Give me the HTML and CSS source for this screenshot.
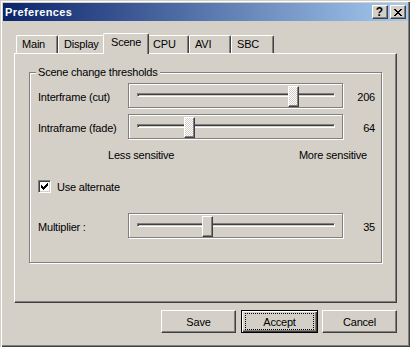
FILE: index.html
```html
<!DOCTYPE html>
<html>
<head>
<meta charset="utf-8">
<title>Preferences</title>
<link rel="stylesheet" href="styles.css">
</head>
<body>
<div class="window">
  <div class="caption">
    <span class="title">Preferences</span>
    <div class="cap-btns">
      <div class="cap-btn help">?</div>
      <div class="cap-btn close">
        <svg width="8" height="7" viewBox="0 0 8 7" shape-rendering="crispEdges">
          <rect x="0" y="0" width="2" height="1"/><rect x="6" y="0" width="2" height="1"/>
          <rect x="1" y="1" width="2" height="1"/><rect x="5" y="1" width="2" height="1"/>
          <rect x="2" y="2" width="4" height="1"/>
          <rect x="3" y="3" width="2" height="1"/>
          <rect x="2" y="4" width="4" height="1"/>
          <rect x="1" y="5" width="2" height="1"/><rect x="5" y="5" width="2" height="1"/>
          <rect x="0" y="6" width="2" height="1"/><rect x="6" y="6" width="2" height="1"/>
        </svg>
      </div>
    </div>
  </div>

  <div class="tabs">
    <div class="tab t-main">Main</div>
    <div class="tab t-display">Display</div>
    <div class="tab t-scene active">Scene</div>
    <div class="tab t-cpu">CPU</div>
    <div class="tab t-avi">AVI</div>
    <div class="tab t-sbc">SBC</div>
  </div>

  <div class="panel">
    <div class="group">
      <span class="group-title">Scene change thresholds</span>

      <div class="slider-row">
        <span class="slider-label">Interframe (cut)</span>
        <div class="slider-box">
          <div class="track"><div class="thumb focus" style="left:150px"></div></div>
        </div>
        <span class="value">206</span>
      </div>

      <div class="slider-row">
        <span class="slider-label">Intraframe (fade)</span>
        <div class="slider-box">
          <div class="track"><div class="thumb focus" style="left:46px"></div></div>
        </div>
        <span class="value">64</span>
      </div>

      <div class="sens">
        <span>Less sensitive</span>
        <span>More sensitive</span>
      </div>

      <div class="check-row">
        <div class="checkbox">
          <svg width="9" height="9" viewBox="0 0 9 9" shape-rendering="crispEdges">
            <rect x="1" y="3" width="1" height="3"/>
            <rect x="2" y="4" width="1" height="3"/>
            <rect x="3" y="5" width="1" height="3"/>
            <rect x="4" y="4" width="1" height="3"/>
            <rect x="5" y="3" width="1" height="3"/>
            <rect x="6" y="2" width="1" height="3"/>
            <rect x="7" y="1" width="1" height="3"/>
          </svg>
        </div>
        <span>Use alternate</span>
      </div>

      <div class="slider-row multiplier">
        <span class="slider-label">Multiplier :</span>
        <div class="slider-box">
          <div class="track"><div class="thumb" style="left:64px"></div></div>
        </div>
        <span class="value">35</span>
      </div>
    </div>
  </div>

  <div class="buttons">
    <div class="btn">Save</div>
    <div class="btn default">Accept</div>
    <div class="btn">Cancel</div>
  </div>
</div>
</body>
</html>
```

FILE: styles.css
```css
* { box-sizing: border-box; }

html, body {
  margin: 0;
  padding: 0;
  background: #d4d0c8;
}

body {
  font-family: "Liberation Sans", Arial, sans-serif;
  font-size: 11px;
  letter-spacing: -0.2px;
  color: #000;
}

.window {
  width: 410px;
  height: 347px;
  background: #d4d0c8;
  padding: 3px 2px 2px 3px;
  box-shadow: inset 1px 1px 0 #d4d0c8, inset 2px 2px 0 #fff,
              inset -1px -1px 0 #404040, inset -2px -2px 0 #808080;
  display: flex;
  flex-direction: column;
}

/* Caption */
.caption {
  height: 18px;
  flex: none;
  display: flex;
  align-items: center;
  justify-content: space-between;
  background: linear-gradient(to right, #0a246a, #a6caf0);
  padding: 0 2px 0 2px;
}

.title {
  color: #fff;
  font-weight: bold;
  font-size: 11px;
  letter-spacing: 0.4px;
}

.cap-btns {
  display: flex;
  gap: 2px;
}

.cap-btn {
  width: 16px;
  height: 14px;
  background: #d4d0c8;
  border: 1px solid;
  border-color: #fff #404040 #404040 #fff;
  box-shadow: inset -1px -1px 0 #808080;
  display: flex;
  align-items: center;
  justify-content: center;
}

.cap-btn.help {
  font-weight: bold;
  font-size: 12px;
  line-height: 12px;
  padding-right: 1px;
  letter-spacing: 0;
}

.cap-btn.close svg {
  display: block;
  fill: #000;
  margin-right: 1px;
}

/* Tabs */
.tabs {
  display: flex;
  align-items: flex-end;
  margin: 12px 0 0 13px;
  height: 20px;
  flex: none;
}

.tab {
  height: 18px;
  border-left: 1px solid #fff;
  border-top: 1px solid #fff;
  border-right: 1px solid #404040;
  box-shadow: inset -1px 0 0 #808080;
  border-top-left-radius: 2px;
  border-top-right-radius: 2px;
  padding-left: 5px;
  line-height: 17px;
  white-space: nowrap;
  background: #d4d0c8;
}

.t-main { width: 42px; }
.t-display { width: 47px; }
.t-scene { width: 42px; }
.t-cpu { width: 42px; }
.t-avi { width: 42px; }
.t-sbc { width: 43px; }

.tab.active {
  width: 46px;
  height: 21px;
  margin: 0 -2px -1px;
  padding-left: 7px;
  line-height: 16px;
  position: relative;
  z-index: 1;
}

/* Panel */
.panel {
  flex: none;
  margin-left: 11px;
  width: 383px;
  height: 250px;
  border: 1px solid;
  border-color: #fff #404040 #404040 #fff;
  box-shadow: inset -1px -1px 0 #808080;
  padding: 18px 0 0 14px;
}

.group {
  position: relative;
  width: 353px;
  height: 191px;
  border: 1px solid #808080;
  box-shadow: inset 1px 1px 0 #fff, 1px 1px 0 #fff;
  padding: 10px 0 0 8px;
}

.group-title {
  position: absolute;
  top: -7px;
  left: 6px;
  padding: 0 2px;
  background: #d4d0c8;
  line-height: 13px;
}

.slider-row {
  display: flex;
  align-items: center;
  height: 25px;
}

.slider-row + .slider-row { margin-top: 6px; }

.slider-row.multiplier { margin-top: 20px; }

.slider-label {
  width: 90px;
  flex: none;
  padding-top: 2px;
}

.slider-box {
  width: 215px;
  height: 25px;
  flex: none;
  border: 1px solid #808080;
  box-shadow: inset 1px 1px 0 #fff, 1px 1px 0 #fff;
  padding: 9px 7px 0 8px;
  display: flex;
  align-items: flex-start;
}

.track {
  position: relative;
  flex: 1;
  height: 4px;
  border-top: 1px solid #808080;
  border-left: 1px solid #808080;
  border-right: 1px solid #fff;
  border-bottom: 1px solid #fff;
  box-shadow: inset 1px 1px 0 #404040;
}

.thumb {
  position: absolute;
  top: -8px;
  width: 11px;
  height: 21px;
  background: #d4d0c8;
  border: 1px solid;
  border-color: #fff #404040 #404040 #fff;
  box-shadow: inset -1px -1px 0 #808080;
}

.thumb.focus {
  background: repeating-conic-gradient(#fff 0 25%, #d4d0c8 0 50%) 0 0 / 2px 2px;
}

.value {
  width: 32px;
  flex: none;
  text-align: right;
  padding-top: 2px;
}

.sens {
  display: flex;
  justify-content: space-between;
  margin: 10px 0 0 70px;
  width: 259px;
  line-height: 13px;
}

.check-row {
  display: flex;
  align-items: center;
  margin-top: 18px;
  height: 13px;
}

.checkbox {
  width: 13px;
  height: 13px;
  flex: none;
  background: #fff;
  border: 1px solid;
  border-color: #808080 #fff #fff #808080;
  box-shadow: inset 1px 1px 0 #404040, inset -1px -1px 0 #d4d0c8;
  padding: 1px;
  margin-right: 6px;
}

.checkbox svg {
  display: block;
  fill: #000;
}

/* Buttons */
.buttons {
  flex: none;
  display: flex;
  justify-content: flex-end;
  margin-top: 7px;
  padding-right: 11px;
}

.btn {
  width: 75px;
  height: 23px;
  border: 1px solid;
  border-color: #fff #404040 #404040 #fff;
  box-shadow: inset -1px -1px 0 #808080;
  display: flex;
  align-items: center;
  justify-content: center;
  padding-top: 1px;
}

.btn.default {
  position: relative;
  width: 77px;
  border-color: #000;
  box-shadow: inset 1px 1px 0 #fff, inset -1px -1px 0 #404040, inset -2px -2px 0 #808080;
  margin: 0 4px 0 5px;
}

.btn.default::after {
  content: "";
  position: absolute;
  left: 3px;
  top: 2px;
  right: 3px;
  bottom: 2px;
  border: 1px dotted #000;
}
```
